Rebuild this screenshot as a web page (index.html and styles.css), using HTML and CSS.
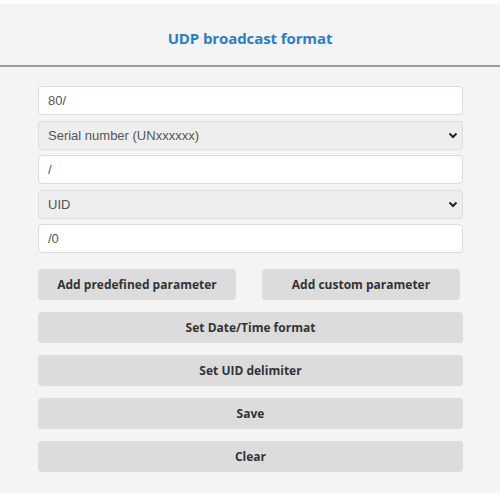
FILE: index.html
```html
<!DOCTYPE html>
<html>
<head>
<meta charset="utf-8">
<link rel="stylesheet" href="styles.css">
</head>
<body>
<div class="panel">
  <div class="header"><h1 class="title">UDP broadcast format</h1></div>
  <div class="content">
    <div class="field">80/</div>
    <div class="field select"><span>Serial number (UNxxxxxx)</span><svg class="chev" width="10" height="7" viewBox="0 0 10 7"><path d="M1.5 1.5 L5 5 L8.5 1.5" fill="none" stroke="#222" stroke-width="2"/></svg></div>
    <div class="field">/</div>
    <div class="field select"><span>UID</span><svg class="chev" width="10" height="7" viewBox="0 0 10 7"><path d="M1.5 1.5 L5 5 L8.5 1.5" fill="none" stroke="#222" stroke-width="2"/></svg></div>
    <div class="field">/0</div>
    <div class="row">
      <button class="btn half">Add predefined parameter</button>
      <button class="btn half">Add custom parameter</button>
    </div>
    <button class="btn">Set Date/Time format</button>
    <button class="btn">Set UID delimiter</button>
    <button class="btn">Save</button>
    <button class="btn">Clear</button>
  </div>
</div>
</body>
</html>
```
FILE: styles.css
```css
html, body { margin: 0; padding: 0; background: #ffffff; }
body { padding-top: 4px; }
.panel {
  background: #f5f3f3;
  height: 489px;
}
.header {
  height: 61px;
  border-bottom: 2px solid #9c9c9c;
  display: flex;
  align-items: center;
  justify-content: center;
}
.title {
  margin: 0;
  font-family: "Open Sans", sans-serif;
  font-weight: 700;
  font-size: 15px;
  color: #2c7ec2;
  letter-spacing: -0.1px;
  padding-top: 6px;
}
.content {
  padding: 19px 37px 0 38px;
  display: flex;
  flex-direction: column;
}
.field {
  height: 29px;
  box-sizing: border-box;
  border: 1px solid #dcdcdc;
  border-radius: 4px;
  background: #ffffff;
  font-family: "Liberation Sans", Arial, sans-serif;
  font-size: 13px;
  color: #555;
  display: flex;
  align-items: center;
  padding: 0 9px;
  margin-bottom: 5.5px;
}
.select {
  background: #eeeeee;
  justify-content: space-between;
  padding-right: 4px;
}
.chev { flex: none; }
.row {
  display: flex;
  justify-content: space-between;
  margin-top: 10.5px;
  padding-right: 3px;
}
.btn {
  height: 31px;
  border: none;
  border-radius: 4px;
  background: #dcdcdc;
  font-family: "Open Sans", sans-serif;
  font-weight: 700;
  font-size: 12px;
  color: #333;
  margin-bottom: 12px;
  padding: 0;
}
.half { width: 198px; }
```
